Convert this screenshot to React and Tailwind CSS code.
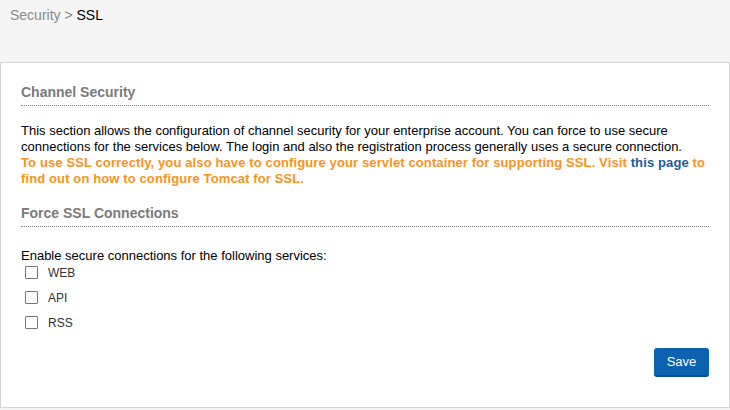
export default function App() {
  const f = { fontFamily: '"Liberation Sans", Arial, sans-serif' };
  return (
    <div className="w-[730px] h-[410px] bg-[#f5f5f5] overflow-hidden" style={f}>
      <div className="h-[62px] pl-[10px] pt-[5px] text-[14px] leading-[20px]">
        <span className="text-[#8a8a8a]">Security &gt; </span>
        <span className="text-black">SSL</span>
      </div>
      <div className="h-[346px] bg-white border border-[#d4d4d4] pl-[20px] pr-[20px] pt-[19px]">
        <h2 className="text-[14px] leading-[20px] font-bold text-[#7b7b7b] pb-[3px] border-b border-dotted border-[#888]">
          Channel Security
        </h2>
        <p className="mt-[17px] text-[13px] leading-[16px] text-black">
          This section allows the configuration of channel security for your enterprise account. You can force to use secure connections for the services below. The login and also the registration process generally uses a secure connection.
        </p>
        <p className="text-[13px] leading-[16px] font-bold tracking-[0.12px] text-[#f7931e]">
          To use SSL correctly, you also have to configure your servlet container for supporting SSL. Visit{" "}
          <a className="text-[#1e5b9a]">this page</a> to find out on how to configure Tomcat for SSL.
        </p>
        <h2 className="mt-[16px] text-[14px] leading-[20px] font-bold text-[#7b7b7b] pb-[3px] border-b border-dotted border-[#888]">
          Force SSL Connections
        </h2>
        <div className="mt-[21px] text-[13px] leading-[16px] text-black">
          Enable secure connections for the following services:
        </div>
        <div className="flex flex-col">
          {["WEB", "API", "RSS"].map((l, i) => (
            <div key={l} className={"flex items-center h-[25px] " + (i === 0 ? "mt-[-4px]" : "")}>
              <span className="ml-[4px] w-[13px] h-[13px] border border-[#767676] bg-white rounded-[1px]" />
              <span className="ml-[10px] text-[12px] text-[#333]">{l}</span>
            </div>
          ))}
        </div>
        <div className="flex justify-end mt-[13px]">
          <button className="w-[55px] h-[29px] bg-[#0a62b1] border-b-2 border-[#08519a] rounded-[3px] text-white text-[13px]" style={f}>
            Save
          </button>
        </div>
      </div>
    </div>
  );
}
